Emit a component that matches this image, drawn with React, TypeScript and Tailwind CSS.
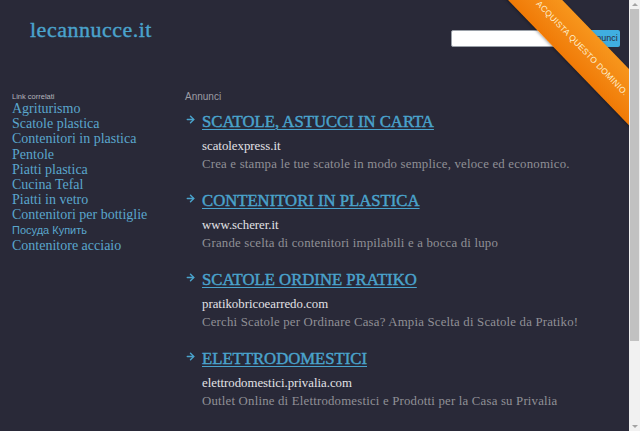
import { ArrowRight } from 'lucide-react';

const links = [
  'Agriturismo',
  'Scatole plastica',
  'Contenitori in plastica',
  'Pentole',
  'Piatti plastica',
  'Cucina Tefal',
  'Piatti in vetro',
  'Contenitori per bottiglie',
  'Посуда Купить',
  'Contenitore acciaio',
];

const ads = [
  {
    title: 'SCATOLE, ASTUCCI IN CARTA',
    domain: 'scatolexpress.it',
    text: 'Crea e stampa le tue scatole in modo semplice, veloce ed economico.',
  },
  {
    title: 'CONTENITORI IN PLASTICA',
    domain: 'www.scherer.it',
    text: 'Grande scelta di contenitori impilabili e a bocca di lupo',
  },
  {
    title: 'SCATOLE ORDINE PRATIKO',
    domain: 'pratikobricoearredo.com',
    text: 'Cerchi Scatole per Ordinare Casa? Ampia Scelta di Scatole da Pratiko!',
  },
  {
    title: 'ELETTRODOMESTICI',
    domain: 'elettrodomestici.privalia.com',
    text: 'Outlet Online di Elettrodomestici e Prodotti per la Casa su Privalia',
  },
];

const serif = "font-['Liberation_Serif','Times_New_Roman',serif]";
const sans = "font-['Liberation_Sans',Arial,sans-serif]";

export default function App() {
  return (
    <div className="flex h-screen w-full overflow-hidden">
      {/* Page */}
      <div className="relative flex-1 overflow-hidden bg-[#292938]">
        {/* Header */}
        <div className="flex h-[91px] justify-between">
          <div
            className={`${serif} pl-[30px] pt-[13px] text-[22px] tracking-[0.5px] text-[#4aa3cc] [-webkit-text-stroke:0.4px_#4aa3cc]`}
          >
            lecannucce.it
          </div>
          <div className="flex pr-[9px] pt-[30px]">
            <div className="h-[17px] w-[132px] rounded-l-[2px] border border-[#9aa0a8] bg-white" />
            <div className={`${sans} flex h-[17px] w-[37px] items-center justify-center rounded-r-[2px] bg-[#40aee0] text-[9px] text-[#2a2a38]`}>
              Annunci
            </div>
          </div>
        </div>

        {/* Body */}
        <div className="flex">
          <div className="w-[185px] pl-[12px] pt-[2px]">
            <div className={`${sans} text-[7.5px] leading-[8px] text-[#b4b4bc]`}>Link correlati</div>
            <ul>
              {links.map((l) =>
                l === 'Посуда Купить' ? (
                  <li key={l} className={`${sans} text-[11px] leading-[15.2px] text-[#5aa6cc]`}>
                    {l}
                  </li>
                ) : (
                  <li key={l} className={`${serif} text-[14px] leading-[15.2px] text-[#5aa6cc]`}>
                    {l}
                  </li>
                )
              )}
            </ul>
          </div>

          <div className="flex-1">
            <div className={`${sans} text-[10px] leading-[12px] text-[#9c9ca4]`}>Annunci</div>
            <div className="mt-[9px] flex flex-col gap-[18px]">
              {ads.map((a) => (
                <div key={a.title} className="flex">
                  <div className="w-[17px] pt-[2px]">
                    <ArrowRight className="h-[11px] w-[11px] text-[#4aa3cc]" strokeWidth={3.2} />
                  </div>
                  <div>
                    <div
                      className={`${serif} text-[16.7px] leading-[20px] text-[#4aa3cc] underline decoration-[1px] underline-offset-[2px] [-webkit-text-stroke:0.45px_#4aa3cc]`}
                    >
                      {a.title}
                    </div>
                    <div className={`${serif} mt-[5px] text-[12.8px] leading-[18px] text-[#e2e2e6]`}>{a.domain}</div>
                    <div className={`${serif} text-[12.8px] leading-[18px] tracking-[0.2px] text-[#909096]`}>{a.text}</div>
                  </div>
                </div>
              ))}
            </div>
          </div>
        </div>

        {/* Ribbon */}
        <div className="absolute left-[452px] top-[29px] flex h-[39px] w-[260px] rotate-[46deg] items-center justify-center bg-gradient-to-b from-[#f7961c] to-[#f07a06] shadow-[0_1px_3px_rgba(0,0,0,0.35)]">
          <span className={`${sans} text-[8.4px] uppercase tracking-[0.3px] text-[#fdf0cf]`}>
            Acquista questo dominio.
          </span>
        </div>
      </div>

      {/* Scrollbar */}
      <div className="flex w-[11px] flex-col items-center bg-[#f1f1f1]">
        <div className="flex h-[9px] items-center justify-center">
          <div className="h-0 w-0 border-x-[3px] border-b-[3px] border-x-transparent border-b-[#a3a3a3]" />
        </div>
        <div className="h-[332px] w-[9px] bg-[#c1c1c1]" />
        <div className="flex-1" />
        <div className="flex h-[9px] items-center justify-center">
          <div className="h-0 w-0 border-x-[3px] border-t-[3px] border-x-transparent border-t-[#a3a3a3]" />
        </div>
      </div>
    </div>
  );
}
